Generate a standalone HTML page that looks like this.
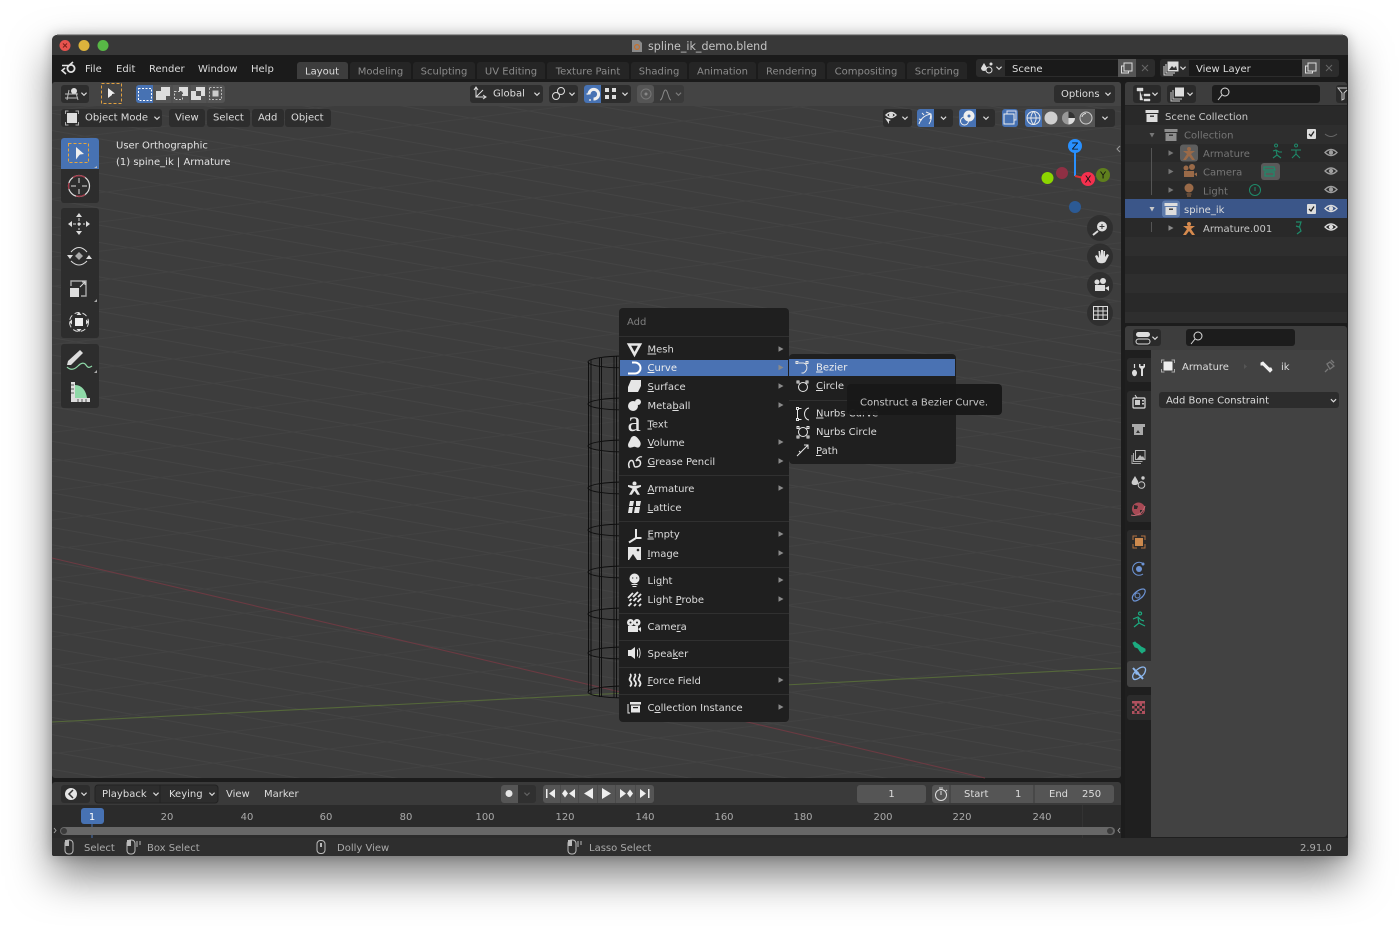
<!DOCTYPE html>
<html><head><meta charset="utf-8"><title>spline_ik_demo.blend</title>
<style>
html,body{margin:0;padding:0;background:#fff;width:1400px;height:926px;overflow:hidden}
#w{position:absolute;left:52px;top:35px;width:1296px;height:821px;border-radius:5px 5px 2px 2px;box-shadow:0 20px 42px rgba(0,0,0,.5),0 0 12px rgba(0,0,0,.22)}
svg{position:absolute;left:0;top:0}
text{font:10px "DejaVu Sans",sans-serif;fill:#c8c8c8}
.u{text-decoration:underline}
.d{fill:#767676}.g{fill:#8c8c8c}.l{fill:#e2e2e2}.m{fill:#aaa}.e{fill:#ddd}
.c{text-anchor:middle}
.i{fill:#e6e6e6}.s{fill:none;stroke:#e6e6e6;stroke-width:1.4}
</style></head><body>
<div id="w"></div>
<svg width="1400" height="926" viewBox="0 0 1400 926">
<defs>
<path id="chev" d="M-2.6-1.3L0 1.3L2.6-1.3" fill="none" stroke="#ddd" stroke-width="1.1"/>
<path id="arr" d="M-2.5-2.7L2.5 0L-2.5 2.7z" fill="#8a8a8a"/>
<g id="eye"><path d="M-6 0Q0-6 6 0Q0 6-6 0z" fill="none" stroke="#ddd" stroke-width="1.3"/><circle r="2.2" fill="#ddd"/></g>
<g id="box"><path d="M-6.5-6h13v3h-13z" fill="#ddd"/><path d="M-5.5-2h11v8h-11z" fill="#ddd"/><path d="M-2-.5h4v1.4h-4z" fill="#333"/></g>
<g id="arm"><circle cy="-5" r="2" /><path d="M-6-3L6-3L2 0L6 6L3 6L0 2L-3 6L-6 6L-2 0z"/></g>
<g id="mouse"><rect x="-4" y="-7" width="8" height="14" rx="3.4" fill="none" stroke="#bbb" stroke-width="1"/><path d="M-4-7h4v6h-4z" fill="#bbb"/></g>
<pattern id="g1" width="60" height="17" patternUnits="userSpaceOnUse" patternTransform="rotate(10)"><path d="M0 .5H60" stroke="#444" stroke-width="1"/></pattern>
<pattern id="g2" width="90" height="29" patternUnits="userSpaceOnUse" patternTransform="rotate(-7)"><path d="M0 .5H90" stroke="#424242" stroke-width="1"/></pattern>
</defs>

<!-- window -->
<path d="M52 40a5 5 0 0 1 5-5H1343a5 5 0 0 1 5 5V854a2 2 0 0 1-2 2H54a2 2 0 0 1-2-2z" fill="#1c1c1c"/>
<path d="M52 40a5 5 0 0 1 5-5H1343a5 5 0 0 1 5 5V55H52z" fill="#383838"/>
<path d="M57 35H1343" stroke="#5a5a5a"/>
<circle cx="65" cy="45.5" r="5.5" fill="#e8534e"/><path d="M63 43.5l4 4m0-4l-4 4" stroke="#7a1f1a" stroke-width="1"/>
<circle cx="84" cy="45.5" r="5.5" fill="#dcb33c"/><circle cx="103" cy="45.5" r="5.5" fill="#58b846"/>
<path d="M632 40h7l3 3v9h-10z" fill="#8a8a8a"/><circle cx="637" cy="47" r="2.4" fill="none" stroke="#c9702b" stroke-width="1.2"/>
<text x="648" y="50" style="font:11.1px 'DejaVu Sans',sans-serif;fill:#c4c4c4">spline_ik_demo.blend</text>

<!-- top bar -->
<rect x="52" y="55" width="1296" height="27" fill="#1b1b1b"/>
<g><circle cx="71" cy="68.5" r="3.6" fill="none" stroke="#e2e2e2" stroke-width="1.8"/><path d="M62 65.500h7l4-3.500M65 68l-3 2.500 4 3.500" fill="none" stroke="#e2e2e2" stroke-width="1.600"/></g>
<text class="e" x="85" y="72">File</text><text class="e" x="116" y="72">Edit</text><text class="e" x="149" y="72">Render</text><text class="e" x="198" y="72">Window</text><text class="e" x="251" y="72">Help</text>
<path d="M297 79V65a3 3 0 0 1 3-3h45a3 3 0 0 1 3 3v14z" fill="#3d3d3d"/>
<g fill="#252525">
<path d="M350 79V65a3 3 0 0 1 3-3h55a3 3 0 0 1 3 3v14z"/><path d="M413 79V65a3 3 0 0 1 3-3h56a3 3 0 0 1 3 3v14z"/><path d="M477 79V65a3 3 0 0 1 3-3h62a3 3 0 0 1 3 3v14z"/><path d="M547 79V65a3 3 0 0 1 3-3h76a3 3 0 0 1 3 3v14z"/><path d="M631 79V65a3 3 0 0 1 3-3h50a3 3 0 0 1 3 3v14z"/><path d="M689 79V65a3 3 0 0 1 3-3h61a3 3 0 0 1 3 3v14z"/><path d="M758 79V65a3 3 0 0 1 3-3h61a3 3 0 0 1 3 3v14z"/><path d="M827 79V65a3 3 0 0 1 3-3h72a3 3 0 0 1 3 3v14z"/><path d="M907 79V65a3 3 0 0 1 3-3h54a3 3 0 0 1 3 3v14z"/></g>
<g class="c"><text class="c e" x="322" y="74.5">Layout</text><text class="c g" x="380.5" y="74.5">Modeling</text><text class="c g" x="444" y="74.5">Sculpting</text><text class="c g" x="511" y="74.5">UV Editing</text><text class="c g" x="588" y="74.5">Texture Paint</text><text class="c g" x="659" y="74.5">Shading</text><text class="c g" x="722.5" y="74.5">Animation</text><text class="c g" x="791.5" y="74.5">Rendering</text><text class="c g" x="866" y="74.5">Compositing</text><text class="c g" x="937" y="74.5">Scripting</text></g>
<!-- scene -->
<rect x="976" y="59" width="179" height="18" rx="3" fill="#2c2c2c"/><rect x="1005" y="60" width="113" height="16" fill="#1a1a1a"/><rect x="1118" y="59" width="18" height="18" fill="#555"/>
<path d="M984 63l3 5a3 3 0 1 1-6 0z" fill="#ddd"/><circle cx="989" cy="70" r="3" fill="none" stroke="#ddd"/><circle cx="991" cy="64" r="1.5" fill="#ddd"/><use href="#chev" x="999" y="68"/>
<text class="e" x="1012" y="72">Scene</text>
<g fill="none" stroke="#ddd"><rect x="1124" y="63" width="8" height="8"/><path d="M1124 66h-2.5v7h7v-2"/></g><path d="M1142 65l6 6m0-6l-6 6" stroke="#666"/>
<rect x="1160" y="59" width="179" height="18" rx="3" fill="#2c2c2c"/><rect x="1189" y="60" width="113" height="16" fill="#1a1a1a"/><rect x="1302" y="59" width="18" height="18" fill="#555"/>
<g fill="none" stroke="#ddd"><rect x="1168" y="62" width="10" height="9" fill="#ddd"/><path d="M1166 64v9h9M1164 66v9h9"/></g><path d="M1169 70l3-4 2 2 2-2 1 4z" fill="#333"/><use href="#chev" x="1183" y="68"/>
<text class="e" x="1196" y="72">View Layer</text>
<g fill="none" stroke="#ddd"><rect x="1308" y="63" width="8" height="8"/><path d="M1308 66h-2.5v7h7v-2"/></g><path d="M1326 65l6 6m0-6l-6 6" stroke="#666"/>

<!-- viewport -->
<rect x="52" y="82" width="1069" height="696" rx="3" fill="#3d3d3d"/>
<rect x="52" y="106" width="1069" height="672" fill="url(#g1)"/><rect x="52" y="106" width="1069" height="672" fill="url(#g2)"/>
<path d="M52 85a3 3 0 0 1 3-3H1118a3 3 0 0 1 3 3v21H52z" fill="#444"/>
<path d="M52 558L985 778" stroke="#6b3a42" stroke-width="1.1"/><path d="M52 722L1121 668" stroke="#55683a" stroke-width="1.1"/>
<!-- cylinder -->
<g fill="none" stroke="#0d0d0d" stroke-width=".9">
<path d="M588.500 362V692M591 360V694M599.500 358V697M601.500 358V697M614 356V698M616.500 356V698"/>
<ellipse cx="625" cy="362" rx="37" ry="6"/><ellipse cx="625" cy="404" rx="37" ry="6"/><ellipse cx="625" cy="446" rx="37" ry="6"/><ellipse cx="625" cy="488" rx="37" ry="6"/><ellipse cx="625" cy="530" rx="37" ry="6"/><ellipse cx="625" cy="572" rx="37" ry="6"/><ellipse cx="625" cy="614" rx="37" ry="6"/><ellipse cx="625" cy="653" rx="37" ry="6"/><ellipse cx="625" cy="692" rx="37" ry="6"/>
</g>

<!-- tool settings -->
<rect x="61" y="85" width="28" height="18" rx="3" fill="#2d2d2d"/><circle cx="74" cy="91" r="3" fill="#ddd"/><path d="M65 94h13M65 98h13M69 90l-2 10M76 93l2 7" stroke="#bbb" fill="none"/><use href="#chev" x="84" y="94"/>
<rect x="101.500" y="83.500" width="20" height="20" fill="none" stroke="#e0a040" stroke-dasharray="3 2"/><path d="M108 88l7 5.500-3 .5v1l-4 3z" fill="#eee"/>
<rect x="136" y="85" width="89" height="18" rx="3" fill="#545454"/><path d="M139 85h14v18h-14a3 3 0 0 1-3-3v-12a3 3 0 0 1 3-3z" fill="#4772b3"/>
<rect x="138.500" y="88.500" width="13" height="12" fill="none" stroke="#fff" stroke-dasharray="2 1.500"/>
<path d="M156 91h5v-4h9v9h-4v4h-10z" fill="#ddd"/>
<rect x="174.500" y="91.500" width="8" height="8" fill="none" stroke="#ccc" stroke-dasharray="2 1.500"/><path d="M179 87h9v9h-5v-5h-4z" fill="#ddd"/>
<path d="M191 91h5v-4h9v9h-4v4h-10zM196 91v5h5v-5z" fill="#ddd" fill-rule="evenodd"/>
<rect x="209.500" y="87.500" width="12" height="12" fill="none" stroke="#bbb" stroke-dasharray="2 1.500"/><rect x="212.500" y="90.500" width="6" height="6" fill="#ccc"/>
<path d="M172 85v18M190 85v18M207 85v18" stroke="#4a4a4a"/>
<rect x="470" y="85" width="73" height="18" rx="3" fill="#2d2d2d"/><path d="M476 88v9h9M474 90l2-3 2 3M483 95l3 2-3 2M476 97l7-7" fill="none" stroke="#ddd"/><text class="e" x="493" y="96.500">Global</text><use href="#chev" x="537" y="94"/>
<rect x="549" y="85" width="29" height="18" rx="3" fill="#2d2d2d"/><circle cx="556" cy="96" r="3.500" fill="none" stroke="#ddd"/><circle cx="561" cy="91" r="3.500" fill="none" stroke="#ddd"/><use href="#chev" x="572" y="94"/>
<rect x="584" y="85" width="47" height="18" rx="3" fill="#2d2d2d"/><path d="M587 85h14v18h-14a3 3 0 0 1-3-3v-12a3 3 0 0 1 3-3z" fill="#4772b3"/>
<path d="M589 94.500a4.800 4.800 0 1 1 4.500 4.500" fill="none" stroke="#eee" stroke-width="3"/><path d="M586.500 94h1.500M589 100h2" stroke="#ddd" stroke-width="1.500"/>
<g fill="#ddd"><rect x="605" y="88" width="4" height="4"/><rect x="612" y="88" width="4" height="4"/><rect x="605" y="95" width="4" height="4"/><rect x="612" y="95" width="4" height="4"/></g><use href="#chev" x="625" y="94"/>
<rect x="637" y="85" width="47" height="18" rx="3" fill="#3a3a3a"/><rect x="637" y="85" width="17" height="18" rx="3" fill="#555"/><circle cx="646" cy="94" r="5" fill="none" stroke="#777"/><circle cx="646" cy="94" r="1.500" fill="#888"/><path d="M660 100c3 0 3-10 5.500-10s3 10 5.500 10" fill="none" stroke="#888"/><use href="#chev" x="678.500" y="94" opacity=".4"/>
<rect x="1054" y="85" width="61" height="18" rx="3" fill="#2d2d2d"/><text class="e" x="1061" y="97">Options</text><use href="#chev" x="1108" y="94"/>

<!-- header row -->
<rect x="61" y="109" width="101" height="18" rx="3" fill="#2d2d2d"/><rect x="67" y="113" width="10" height="10" fill="#ddd"/><path d="M65.500 114v-3h3M75.500 111h3v3M78.500 122v3h-3M68.500 125h-3v-3" fill="none" stroke="#aaa"/><text class="e" x="85" y="120.500">Object Mode</text><use href="#chev" x="157" y="118"/>
<rect x="169" y="109" width="36" height="18" rx="3" fill="#2d2d2d"/><rect x="207" y="109" width="43" height="18" rx="3" fill="#2d2d2d"/><rect x="252" y="109" width="32" height="18" rx="3" fill="#2d2d2d"/><rect x="285" y="109" width="46" height="18" rx="3" fill="#2d2d2d"/>
<text class="e" x="175" y="120.500">View</text><text class="e" x="213" y="120.500">Select</text><text class="e" x="258" y="120.500">Add</text><text class="e" x="291" y="120.500">Object</text>
<rect x="883" y="109" width="29" height="18" rx="3" fill="#2d2d2d"/><path d="M886 115q5-5 10 0q-5 5-10 0z" fill="none" stroke="#ddd" stroke-width="1.400"/><circle cx="891" cy="115" r="2" fill="#ddd"/><path d="M885 118l6 2-2 1v3z" fill="#ddd"/><use href="#chev" x="905" y="118"/>
<rect x="917" y="109" width="36" height="18" rx="3" fill="#2d2d2d"/><path d="M920 109h14v18h-14a3 3 0 0 1-3-3v-12a3 3 0 0 1 3-3z" fill="#4772b3"/><path d="M919 124c2-6 6-9 12-10M926 112l5 2-1 5M931 114c1 4 0 7-2 10M919 119l3 1M922 113l2 2" fill="none" stroke="#eee"/><use href="#chev" x="943.500" y="118"/>
<rect x="959" y="109" width="36" height="18" rx="3" fill="#2d2d2d"/><path d="M962 109h14v18h-14a3 3 0 0 1-3-3v-12a3 3 0 0 1 3-3z" fill="#4772b3"/><circle cx="969" cy="116" r="5.500" fill="#eee"/><circle cx="964.500" cy="121" r="4" fill="none" stroke="#eee"/><circle cx="969" cy="116" r="1.500" fill="#4772b3"/><use href="#chev" x="986" y="118"/>
<rect x="1002" y="109" width="16" height="18" rx="3" fill="#4772b3"/><rect x="1007" y="111" width="9" height="9" fill="none" stroke="#dde"/><rect x="1004" y="114" width="10" height="10" fill="#4772b3" stroke="#eee"/>
<rect x="1025" y="109" width="90" height="18" rx="3" fill="#2d2d2d"/><rect x="1042" y="109" width="35" height="18" fill="#555"/><rect x="1077" y="109" width="18" height="18" fill="#555"/><path d="M1028 109h14v18h-14a3 3 0 0 1-3-3v-12a3 3 0 0 1 3-3z" fill="#4772b3"/>
<circle cx="1033.500" cy="118" r="6.500" fill="none" stroke="#eee"/><path d="M1027 118h13M1033.500 111.500c-3.500 4-3.500 9 0 13M1033.500 111.500c3.500 4 3.500 9 0 13" fill="none" stroke="#eee" stroke-width=".9"/>
<circle cx="1051" cy="118" r="6.500" fill="#cfcfcf"/><circle cx="1068.500" cy="118" r="6.500" fill="#999"/><path d="M1068.500 118v-6.500a6.500 6.500 0 0 1 0 13z" fill="#333"/><path d="M1068.500 118h6.500a6.500 6.500 0 0 1-6.500 6.500z" fill="#ddd"/>
<circle cx="1086" cy="118" r="6" fill="#666" stroke="#ccc"/><path d="M1082 117a4 4 0 0 1 4-3.500" stroke="#ddd" fill="none"/><use href="#chev" x="1105" y="118"/>

<text class="l" x="116" y="148.500">User Orthographic</text><text class="l" x="116" y="165">(1) spine_ik | Armature</text>

<!-- toolbar -->
<rect x="61" y="138" width="38" height="65" rx="3" fill="#2d2d2d"/><path d="M64 138h32a3 3 0 0 1 3 3v28H61v-28a3 3 0 0 1 3-3z" fill="#4772b3"/>
<rect x="68.500" y="143.500" width="20" height="19" fill="none" stroke="#e6a63c" stroke-dasharray="3 2"/><path d="M76 147l8 7-4 .5-1 1-3 4z" fill="#eee"/><path d="M97 166v2h-3z" fill="#bbb"/>
<circle cx="79" cy="186" r="10.500" fill="none" stroke="#ddd" stroke-width="1.200"/><path d="M73 177.500a10.500 10.500 0 0 1 12 0M85 194.500a10.500 10.500 0 0 1-9 1.300M69 183a10.500 10.500 0 0 0 0 6" stroke="#a43848" fill="none" stroke-width="1.300"/><path d="M79 178v5M79 189v5M71 186h5M82 186h5" stroke="#ddd"/>
<rect x="61" y="208" width="38" height="130" rx="3" fill="#2d2d2d"/><rect x="61" y="344" width="38" height="64" rx="3" fill="#2d2d2d"/>
<path d="M79 213l3 4h-6zM79 235l3-4h-6zM68 224l4-3v6zM90 224l-4-3v6z" fill="#ddd"/><path d="M79 218v12M73 224h12" stroke="#ddd" stroke-dasharray="3 2"/><circle cx="79" cy="224" r="1.500" fill="#ddd"/>
<path d="M71 252Q79 243 87 252M71 261Q79 269 87 261" fill="none" stroke="#ddd"/><path d="M67 255h6l-3 4zM86 259h6l-3-4z" fill="#ddd"/><path d="M79 252l4 4-4 4-4-4z" fill="#aaa"/>
<rect x="70" y="288" width="9" height="9" fill="#ddd"/><path d="M71 286v-5h15v15h-5" fill="none" stroke="#aaa" stroke-width="1.400"/><path d="M80 287l5-5M82 282h3v3" stroke="#ddd" fill="none"/><path d="M97 299v3h-3z" fill="#aaa"/>
<circle cx="79" cy="322" r="9.500" fill="none" stroke="#ddd" stroke-dasharray="5 3"/><rect x="75" y="318" width="8" height="8" fill="#eee"/><path d="M79 312l-2.500 3h5zM79 332l-2.500-3h5zM69 322l3-2.500v5zM89 322l-3-2.500v5z" fill="#ddd"/>
<path d="M67 365l1-4 12-11 3 3-12 12z" fill="#ddd"/><path d="M67 367c4 4 8 2 11-1s6-4 8-1 3 3 6 1" stroke="#8fd9a8" fill="none" stroke-width="1.200"/><path d="M97 370v3h-3z" fill="#aaa"/>
<path d="M71 382h4v16h15v4H71z" fill="#ddd"/><path d="M75 385c7 0 11 6 12 13H75z" fill="#8fd9a8"/><path d="M71 385h3M71 389h3M71 393h3M78 402v-3M82 402v-3M86 402v-3" stroke="#555"/>

<!-- gizmo -->
<path d="M1075 146V176" stroke="#2890ff" stroke-width="2"/><path d="M1075 176l13 3" stroke="#d33" stroke-width="2"/>
<circle cx="1103" cy="175" r="7" fill="#5f7f1d"/><circle cx="1047.500" cy="178" r="6" fill="#8cd600"/><circle cx="1062" cy="173" r="6" fill="#8f3044"/><circle cx="1075" cy="207" r="6" fill="#2c5a94"/>
<circle cx="1075" cy="146" r="7" fill="#2890ff"/><circle cx="1088" cy="179" r="7" fill="#f5304e"/>
<text x="1075" y="149.500" class="c" style="fill:#111">Z</text><text x="1088" y="182.500" class="c" style="fill:#111">X</text><text x="1103" y="178.500" class="c" style="fill:#111">Y</text>
<path d="M1120 146l-3 3 3 3" stroke="#999" fill="none"/>
<g fill="#2d2d2d" opacity=".85"><circle cx="1100" cy="228" r="13"/><circle cx="1100" cy="256.500" r="13"/><circle cx="1100" cy="285" r="13"/><circle cx="1100" cy="313" r="13"/></g>
<circle cx="1102" cy="226.500" r="5" fill="#ddd"/><path d="M1098 231l-5 4" stroke="#ddd" stroke-width="2"/><path d="M1102 224v5M1099.500 226.500h5" stroke="#333"/>
<path d="M1095 256l2 5c1 3 8 3 9 0l3-6-2-1-2 3v-6h-1.500l-.5 5v-6h-2v6l-1-5h-1.500l.5 7-2-3z" fill="#ddd"/>
<circle cx="1097" cy="282" r="2.500" fill="#ddd"/><circle cx="1103" cy="281" r="3" fill="#ddd"/><rect x="1095" y="285" width="10" height="6" fill="#ddd"/><path d="M1105 288l4-2v5z" fill="#ddd"/>
<g stroke="#ddd" fill="none"><rect x="1093.500" y="306.500" width="14" height="13"/><path d="M1098 306.500v13M1103 306.500v13M1093.500 311h14M1093.500 315h14"/></g>

<!-- menu -->
<rect x="619" y="308" width="170" height="414" rx="4" fill="#1f1f1f"/>
<text x="627" y="325" style="fill:#7f7f7f">Add</text>
<g stroke="#303030"><path d="M619 336.500H789M619 475.500H789M619 521.500H789M619 567.500H789M619 613.500H789M619 640.500H789M619 667.500H789M619 694.500H789"/></g>
<rect x="620" y="360" width="168" height="16" fill="#4a72b3"/>
<g class="m"><text x="647.500" y="352.500" class="e"><tspan class="u">M</tspan>esh</text><text x="647.500" y="371" style="fill:#eee"><tspan class="u">C</tspan>urve</text><text x="647.500" y="390" class="e"><tspan class="u">S</tspan>urface</text><text x="647.500" y="409" class="e">Meta<tspan class="u">b</tspan>all</text><text x="647.500" y="427.500" class="e"><tspan class="u">T</tspan>ext</text><text x="647.500" y="446" class="e"><tspan class="u">V</tspan>olume</text><text x="647.500" y="465" class="e"><tspan class="u">G</tspan>rease Pencil</text>
<text x="647.500" y="492" class="e"><tspan class="u">A</tspan>rmature</text><text x="647.500" y="511" class="e"><tspan class="u">L</tspan>attice</text><text x="647.500" y="537.500" class="e"><tspan class="u">E</tspan>mpty</text><text x="647.500" y="557" class="e"><tspan class="u">I</tspan>mage</text><text x="647.500" y="584" class="e">Li<tspan class="u">g</tspan>ht</text><text x="647.500" y="603" class="e">Light <tspan class="u">P</tspan>robe</text><text x="647.500" y="630" class="e">Came<tspan class="u">r</tspan>a</text><text x="647.500" y="657" class="e">Spea<tspan class="u">k</tspan>er</text><text x="647.500" y="684" class="e"><tspan class="u">F</tspan>orce Field</text><text x="647.500" y="711" class="e">C<tspan class="u">o</tspan>llection Instance</text></g>
<use href="#arr" x="781" y="349"/><use href="#arr" x="781" y="367.500"/><use href="#arr" x="781" y="386"/><use href="#arr" x="781" y="405"/><use href="#arr" x="781" y="442"/><use href="#arr" x="781" y="461"/><use href="#arr" x="781" y="488"/><use href="#arr" x="781" y="534"/><use href="#arr" x="781" y="553"/><use href="#arr" x="781" y="580"/><use href="#arr" x="781" y="599"/><use href="#arr" x="781" y="680"/><use href="#arr" x="781" y="707"/>
<!-- menu icons -->
<path d="M629 344.500H640L634.500 354.500z" fill="none" stroke="#e6e6e6" stroke-width="2.600"/>
<path d="M632 362.500h3a5.500 5.500 0 0 1 0 11h-7" fill="none" stroke="#fff" stroke-width="2"/>
<path d="M631 380h10v6l-3 6h-10v-5z" class="i"/>
<circle cx="633" cy="406" r="5" class="i"/><circle cx="638" cy="402" r="3" class="i"/>
<text x="627.500" y="431" style="font:30px 'Liberation Serif',serif;fill:#e6e6e6">a</text>
<path d="M628.500 447c-1.500-3 1-5 2-8s4-4 6-2 5 5 4 8-3 3-5 2-5 2-7 0z" class="i"/>
<path d="M629.500 468c-2-4 0-8 2.500-7.500s1 6.500 3.500 6.500 5-1 5-4-3-4-4.500-2" fill="none" stroke="#e6e6e6" stroke-width="1.500"/><path d="M636 461c1-3 4-5 6-4" fill="none" stroke="#e6e6e6" stroke-width="1.300"/>
<circle cx="634.500" cy="483.500" r="2" class="i"/><path d="M628 485l6.500 1 6.500-1v1.800l-4.500 2 3.500 6h-2.800l-2.700-4-2.700 4h-2.800l3.500-6-4.500-2z" class="i"/>
<path d="M630 501h4l-1 5h-4zM636 501h5l-1 5h-4zM629 507h4l-1 6h-4zM635 507h5l-1 6h-5z" class="i"/>
<path d="M636 529v9l5.500 0M636 538l-7 4.500" fill="none" stroke="#e6e6e6" stroke-width="2"/>
<rect x="628" y="547" width="13" height="13" class="i"/><path d="M629 560l4-6 4 6z" fill="#222"/><circle cx="638" cy="550" r="1.300" fill="#222"/>
<circle cx="634.500" cy="578.500" r="5" class="i"/><path d="M631.500 584.500h6M632.500 586.500h4" stroke="#e6e6e6"/><path d="M632 578h1.300M636 578h1.300" stroke="#333"/>
<g stroke="#e6e6e6" stroke-width="1.900" fill="none"><path d="M628 598l5-5M629.500 601l2-2M633 597l5-5M628.500 606l3-3M633.500 601l3-3M638 597l3-3M634 606l2-2M637.500 602l3.500-3.500M639 606l2-2"/></g>
<circle cx="630.500" cy="622.500" r="3.500" class="i"/><circle cx="637" cy="622.500" r="3.500" class="i"/><rect x="628" y="626" width="10" height="6" class="i"/><path d="M638 629l3-2v5z" class="i"/><circle cx="630.500" cy="622.500" r="1" fill="#222"/><circle cx="637" cy="622.500" r="1" fill="#222"/>
<path d="M628 650h3l4-3v12l-4-3h-3z" class="i"/><path d="M637.500 649.500v7M639 648c1.500 3 1.500 7 0 10" fill="none" stroke="#e6e6e6"/>
<path d="M630 674c3 2-2 4.500 0 6.500s2 4 0 6M634.500 674c3 2-2 4.500 0 6.500s2 4 0 6M639 674c3 2-2 4.500 0 6.500s2 4 0 6" fill="none" stroke="#e6e6e6" stroke-width="1.800"/>
<path d="M630 702h11v2.500h-11zM631 705.500h9v7h-9z" class="i"/><path d="M633 707h5v1.200h-5z" fill="#222"/><path d="M628 704v9h2" fill="none" stroke="#e6e6e6"/>

<!-- submenu -->
<rect x="789" y="354" width="167" height="110" rx="4" fill="#1f1f1f"/>
<rect x="789" y="359" width="166" height="17" fill="#4a72b3"/>
<path d="M789 400.500H956" stroke="#303030"/>
<text x="816" y="370.500" style="fill:#eee"><tspan class="u">B</tspan>ezier</text><text class="e" x="816" y="389"><tspan class="u">C</tspan>ircle</text><text class="e" x="816" y="416.500"><tspan class="u">N</tspan>urbs Curve</text><text class="e" x="816" y="435">N<tspan class="u">u</tspan>rbs Circle</text><text class="e" x="816" y="454"><tspan class="u">P</tspan>ath</text>
<g fill="none" stroke="#e6e6e6"><path d="M799 363h4.500c4 1 5 7 0 10h-2"/><rect x="796" y="361.500" width="2" height="2"/><rect x="806" y="361.500" width="2" height="2"/><circle cx="803" cy="387" r="4.500"/><rect x="797" y="381" width="2" height="2"/><rect x="806" y="381" width="2" height="2"/>
<path d="M797.500 410v8M798.500 408.500h3M798.500 419.500h3M809 408c-6 1-6 11 0 12"/><rect x="796.500" y="407.500" width="2" height="2"/><rect x="796.500" y="418.500" width="2" height="2"/>
<circle cx="803" cy="432" r="4.500"/><rect x="797" y="426.500" width="2" height="2"/><rect x="807" y="426.500" width="2" height="2"/><rect x="797" y="436" width="2" height="2"/><rect x="807" y="436" width="2" height="2"/>
<path d="M797 456l11-11M804 445h4v4M799 451l2 2"/></g>
<rect x="847" y="384" width="155" height="31" rx="4" fill="#181818" fill-opacity=".96"/>
<text x="860" y="405.500" style="fill:#c8c8c8">Construct a Bezier Curve.</text>

<!-- timeline -->
<path d="M52 785a3 3 0 0 1 3-3H1118a3 3 0 0 1 3 3v22H52z" fill="#3a3a3a"/>
<rect x="52" y="805" width="1069" height="33" fill="#2b2b2b"/>
<rect x="61" y="785" width="29" height="18" rx="3" fill="#2d2d2d"/><circle cx="71" cy="794" r="6" fill="#e6e6e6"/><path d="M73 790l-4 4 4 4" stroke="#333" fill="none" stroke-width="1.500"/><use href="#chev" x="84" y="794"/>
<rect x="95" y="785" width="123" height="18" rx="3" fill="#2d2d2d" stroke="#222"/><path d="M160 785v18" stroke="#222"/>
<text class="e" x="102" y="797">Playback</text><use href="#chev" x="156" y="794"/><text class="e" x="169" y="797">Keying</text><use href="#chev" x="212" y="794"/><text class="e" x="226" y="797">View</text><text class="e" x="264" y="797">Marker</text>
<rect x="501" y="785" width="35" height="18" rx="3" fill="#303030"/><path d="M504 785h14v18h-14a3 3 0 0 1-3-3v-12a3 3 0 0 1 3-3z" fill="#555"/><circle cx="509" cy="793.500" r="3.500" fill="#e6e6e6"/><use href="#chev" x="527" y="794" opacity=".3"/>
<rect x="543" y="785" width="111" height="18" rx="3" fill="#555"/>
<path d="M560.500 785v18M578.500 785v18M597.500 785v18M615.500 785v18M635.500 785v18" stroke="#4a4a4a"/>
<path d="M546 789h1.500v9H546zM555 789v9l-6-4.500zM562 793.500l3-4 3 4-3 4zM569 793.500l6-4.500v9zM593 788v11l-9-5.500zM602 788v11l9-5.500zM620 789l6 4.500-6 4.500zM627 793.500l3-4 3 4-3 4zM640 789l6 4.500-6 4.500zM648 789h1.500v9H648z" fill="#eee"/>
<rect x="857" y="785" width="69" height="18" rx="3" fill="#555"/><text class="c e" x="891.500" y="797">1</text>
<rect x="932" y="785" width="182" height="18" rx="3" fill="#555"/><path d="M950 785v18M1034 785v18" stroke="#3a3a3a"/>
<circle cx="941" cy="795" r="5.500" fill="none" stroke="#ddd"/><path d="M941 795v-4M939 788h4M946 790l1 1" stroke="#ddd"/>
<text class="e" x="964" y="797">Start</text><text class="e" x="1015" y="797">1</text><text class="e" x="1049" y="797">End</text><text class="e" x="1082" y="797">250</text>
<path d="M1082.500 805V838" stroke="#333"/>
<rect x="81" y="808" width="23" height="16" rx="3" fill="#4772b3"/><text class="c" x="92" y="820" style="fill:#fff">1</text><path d="M92 824V838" stroke="#4772b3"/>
<g class="g"><text class="c m" x="167" y="820">20</text><text class="c m" x="247" y="820">40</text><text class="c m" x="326" y="820">60</text><text class="c m" x="406" y="820">80</text><text class="c m" x="485" y="820">100</text><text class="c m" x="565" y="820">120</text><text class="c m" x="645" y="820">140</text><text class="c m" x="724" y="820">160</text><text class="c m" x="803" y="820">180</text><text class="c m" x="883" y="820">200</text><text class="c m" x="962" y="820">220</text><text class="c m" x="1042" y="820">240</text></g>
<rect x="60" y="827" width="1055" height="8" rx="4" fill="#676767"/><circle cx="64" cy="831" r="3" fill="#3a3a3a"/><circle cx="1110" cy="831" r="3" fill="#3a3a3a"/>
<path d="M54 828l2 2.500-2 2.500M1120 828l-2 2.500 2 2.500" stroke="#999" fill="none"/>

<!-- status -->
<path d="M52 838H1348V854a2 2 0 0 1-2 2H54a2 2 0 0 1-2-2z" fill="#2e2e2e"/>
<use href="#mouse" x="69" y="847"/><text class="m" x="84" y="851">Select</text>
<use href="#mouse" x="131" y="847"/><path d="M137 841v6M140 841v4" stroke="#bbb"/><text class="m" x="147" y="851">Box Select</text>
<rect x="317" y="840.500" width="8" height="13" rx="3.400" fill="none" stroke="#bbb"/><rect x="320" y="843" width="2" height="4" fill="#bbb"/><text class="m" x="337" y="851">Dolly View</text>
<use href="#mouse" x="572" y="847"/><path d="M578 841v6M581 841v4" stroke="#bbb"/><text class="m" x="589" y="851">Lasso Select</text>
<text class="m" x="1300" y="851">2.91.0</text>

<!-- outliner -->
<path d="M1125 85a3 3 0 0 1 3-3H1344a3 3 0 0 1 3 3V323H1125z" fill="#292929"/>
<path d="M1125 85a3 3 0 0 1 3-3H1344a3 3 0 0 1 3 3V105H1125z" fill="#3d3d3d"/>
<g fill="#2e2e2e"><rect x="1125" y="125" width="222" height="19"/><rect x="1125" y="162" width="222" height="19"/><rect x="1125" y="237" width="222" height="19"/><rect x="1125" y="274" width="222" height="19"/><rect x="1125" y="312" width="222" height="11"/></g>
<rect x="1125" y="199" width="222" height="19" fill="#3b5689"/>
<rect x="1133" y="85" width="28" height="18" rx="3" fill="#2a2a2a"/><path d="M1137 88h6v3h-6zM1140 91v9h3M1140 95h3M1144 94h6v2h-6zM1144 99h6v2h-6z" fill="#ddd" stroke="#ddd" stroke-width=".4"/><use href="#chev" x="1155" y="94"/>
<rect x="1167" y="85" width="29" height="18" rx="3" fill="#2a2a2a"/><rect x="1175" y="87.500" width="9" height="9" fill="#ddd"/><path d="M1173 90v9h9M1171 92v9h9" fill="none" stroke="#ccc"/><use href="#chev" x="1190" y="94"/>
<rect x="1212" y="85" width="108" height="18" rx="3" fill="#1c1c1c"/><circle cx="1225" cy="92" r="4" fill="none" stroke="#ddd"/><path d="M1222 95l-4 5" stroke="#ddd"/>
<path d="M1347 85h-8a3 3 0 0 0-3 3v12a3 3 0 0 0 3 3h8z" fill="#2a2a2a"/><path d="M1347 88h-9l4 5v7l2-1v-6l3-3" fill="none" stroke="#ccc"/>
<rect x="1125" y="105" width="222" height="1" fill="#242424"/>
<use href="#box" x="1152" y="116"/><text x="1165" y="120">Scene Collection</text>
<g opacity=".55"><use href="#box" x="1171" y="135"/></g><text class="d" x="1184" y="138.500">Collection</text>
<path d="M1149.500 133h5l-2.500 4.500z" fill="#777"/><path d="M1149.500 207h5l-2.500 4.500z" fill="#c8c8c8"/>
<rect x="1307" y="129" width="9" height="10" rx="1" fill="#ddd"/><path d="M1309 134l2 2 3-4.500" stroke="#222" fill="none" stroke-width="1.300"/><path d="M1325 134q6 5 12 0" stroke="#666" fill="none"/>
<path d="M1151.500 148V195M1151.500 222V232" stroke="#555"/>
<use href="#arr" x="1171" y="153" opacity=".8"/><use href="#arr" x="1171" y="171.500" opacity=".8"/><use href="#arr" x="1171" y="190" opacity=".8"/><use href="#arr" x="1171" y="228"/>
<rect x="1180" y="144.500" width="18" height="17" rx="3" fill="#5e5e5e"/><use href="#arm" x="1189" y="154" fill="#9a6a48"/>
<text class="d" x="1203" y="157">Armature</text>
<path d="M1276 147a1.500 1.500 0 1 1 .1 0M1273 151l3-1 3 2 3 0M1276 150l1 5-4 3M1277 155l4 3" fill="none" stroke="#1e8a6a" stroke-width="1.100"/><path d="M1296 147a1.500 1.500 0 1 1 .1 0M1291 150h10M1296 150v4l-4 4M1296 154l4 4" fill="none" stroke="#1e8a6a" stroke-width="1.100"/>
<circle cx="1186" cy="168" r="2.500" fill="#9a6a48"/><circle cx="1192" cy="167" r="3" fill="#9a6a48"/><rect x="1184" y="171" width="10" height="6" fill="#9a6a48"/><path d="M1194 174l3-1.500v4z" fill="#9a6a48"/>
<text class="d" x="1203" y="175.500">Camera</text>
<rect x="1261" y="163" width="19" height="17" rx="3" fill="#5a5a5a"/><path d="M1264 167h10l1 3h-11zM1265 172h9v4h-9z" fill="none" stroke="#1e8a6a" stroke-width="1.300"/>
<circle cx="1189" cy="188" r="4.500" fill="#9a6a48"/><path d="M1186.500 194h5M1187 196h4" stroke="#9a6a48"/>
<text class="d" x="1203" y="194.500">Light</text>
<circle cx="1255" cy="190" r="5.500" fill="none" stroke="#1e8a6a"/><path d="M1255 187v4" stroke="#1e8a6a"/>
<use href="#eye" x="1331" y="152.500" opacity=".65"/><use href="#eye" x="1331" y="171" opacity=".65"/><use href="#eye" x="1331" y="189.500" opacity=".65"/>
<rect x="1162" y="200.500" width="18" height="17" rx="3" fill="#5e7bab"/><use href="#box" x="1171" y="209"/>
<text x="1184" y="213" style="fill:#ddd">spine_ik</text><rect x="1307" y="204" width="9" height="10" rx="1" fill="#ddd"/><path d="M1309 209l2 2 3-4.500" stroke="#222" fill="none" stroke-width="1.300"/><use href="#eye" x="1331" y="208.500"/>
<use href="#arm" x="1189" y="229" fill="#d68a4e"/><text x="1203" y="232">Armature.001</text>
<path d="M1296 222h5l-1.500 5 1.500 4-4 3M1299 227l-3-1" fill="none" stroke="#1e8a6a" stroke-width="1.200"/><use href="#eye" x="1331" y="227"/>

<!-- properties -->
<path d="M1125 329a3 3 0 0 1 3-3H1344a3 3 0 0 1 3 3V838H1125z" fill="#1f1f1f"/>
<path d="M1125 329a3 3 0 0 1 3-3H1344a3 3 0 0 1 3 3V350H1125z" fill="#3d3d3d"/>
<path d="M1151 350H1347V834a3 3 0 0 1-3 3H1151z" fill="#424242"/>
<rect x="1133" y="329" width="28" height="17" rx="3" fill="#2a2a2a"/><rect x="1136" y="332" width="14" height="5" rx="2.500" fill="#ddd"/><rect x="1136" y="339" width="14" height="5" rx="2.500" fill="none" stroke="#ddd"/><use href="#chev" x="1155" y="338"/>
<rect x="1186" y="329" width="109" height="17" rx="3" fill="#1c1c1c"/><circle cx="1198" cy="336" r="4" fill="none" stroke="#ddd"/><path d="M1195 339l-4 5" stroke="#ddd"/>
<!-- tabs -->
<g fill="#2b2b2b"><path d="M1130 358h21v24h-21a3 3 0 0 1-3-3v-18a3 3 0 0 1 3-3z"/><path d="M1130 391h21v131h-21a3 3 0 0 1-3-3V394a3 3 0 0 1 3-3z"/><path d="M1130 530h21v157h-21a3 3 0 0 1-3-3V533a3 3 0 0 1 3-3z"/><path d="M1130 695h21v25h-21a3 3 0 0 1-3-3v-19a3 3 0 0 1 3-3z"/></g>
<path d="M1130 661h21v26h-21a3 3 0 0 1-3-3v-20a3 3 0 0 1 3-3z" fill="#424242"/>
<path d="M1134.500 364v4" stroke="#ddd" stroke-width="1.200"/><ellipse cx="1134.500" cy="373" rx="2.500" ry="3.200" fill="#ddd"/><path d="M1139 364v3l2 2v7h2v-7l2-2v-3l-1.500 0v2h-3v-2z" fill="#ddd"/>
<rect x="1133" y="398" width="12" height="10" rx="1" fill="none" stroke="#ddd" stroke-width="1.200"/><path d="M1135 395l2 3" stroke="#ddd"/><path d="M1135 400h5v5h-5zM1142 400h2v1.500h-2zM1142 403h2v1.500h-2z" fill="#ccc"/>
<path d="M1132 424h13v3h-2v8h-9v-8h-2z" fill="#aaa"/><path d="M1136 433l2-3 2 3z" fill="#333"/>
<rect x="1135.500" y="450.500" width="9.500" height="9" fill="#2b2b2b" stroke="#bbb"/><path d="M1137 459l3-4 2 2 1-1 1.500 3z" fill="#bbb"/><path d="M1133.500 453v8.500h9M1132 455v8.500h9" fill="none" stroke="#aaa"/>
<path d="M1135 476l3 5c1 3-1 4-2.500 4h-1.500c-2 0-3-2-2-4z" fill="#ccc"/><circle cx="1143" cy="478" r="1.700" fill="#ccc"/><circle cx="1141.500" cy="485" r="3.300" fill="#333" stroke="#ccc"/>
<circle cx="1138.500" cy="509" r="6.500" fill="#a84a55"/><path d="M1134 505l4 1-1 3-3 0zM1140 510l4 0-2 4-2-1z" fill="#2b2b2b"/><path d="M1131 515c6 2 12-2 14-9" fill="none" stroke="#c26a74"/>
<rect x="1135" y="538" width="8" height="8" fill="#cc8a4e"/><path d="M1133 540v-4h4M1141 536h4v4M1145 544v4h-4M1137 548h-4v-4" fill="none" stroke="#b07040"/>
<circle cx="1139" cy="569" r="3" fill="#6c93d4"/><path d="M1143 574a6.500 6.500 0 1 1-1-11" fill="none" stroke="#6c93d4"/><circle cx="1143" cy="564" r="1.500" fill="#6c93d4"/>
<path d="M1133 600c-3-5 6-11 10-11s2 6-2 9-7 4-8 2z" fill="none" stroke="#6c93d4" stroke-width="1.200"/><circle cx="1137.500" cy="595.500" r="2.500" fill="none" stroke="#6c93d4"/>
<path d="M1140 615a1.500 1.500 0 1 1 .1 0M1133 619l5-2 3 3 3 1M1138 618l1 5-5 4M1139 623l6 3" fill="none" stroke="#1cab80" stroke-width="1.200"/>
<path d="M1133 643l2-1 1 1 3 2 2 2 2 1 2 1 0 2-2 1-1 1-2-2-2-3-3-1-1-2z" fill="#1cab80" stroke="#1cab80"/>
<path d="M1133 678c-2-4 6-11 10-11s3 6-1 9-8 5-9 2z" fill="none" stroke="#8eb9f0" stroke-width="1.300"/><path d="M1133 668l10 11" stroke="#8eb9f0" stroke-width="2"/><circle cx="1137" cy="673" r="1.800" fill="#8eb9f0"/>
<rect x="1132" y="701" width="13" height="13" fill="#b0505e"/><path d="M1132 703.500h2.500v2.500h-2.500zM1137 703.500h2.500v2.500h-2.500zM1142 703.500h2.500v2.500h-2.500zM1134.500 706h2.500v2.500h-2.500zM1139.500 706h2.500v2.500h-2.500zM1132 708.500h2.500v2.500h-2.500zM1137 708.500h2.500v2.500h-2.500zM1142 708.500h2.500v2.500h-2.500zM1134.500 711h2.500v2.500h-2.500zM1139.500 711h2.500v2.500h-2.500z" fill="#2b2b2b"/>
<!-- breadcrumb -->
<rect x="1163.500" y="361.500" width="9" height="9" fill="#eee"/><path d="M1161.500 363v-3h3M1171.500 360h3v3M1174.500 369v3h-3M1164.500 372h-3v-3" fill="none" stroke="#aaa"/>
<text x="1182" y="370" class="e">Armature</text><path d="M1244 364l3 2.500-3 2.500z" fill="#555"/>
<path d="M1261 363l2-1 1 1 5 5 2 0 1 2-1 1-1 1-2-2-5-5-2 0z" fill="#eee" stroke="#eee"/><text x="1281" y="370" class="e">ik</text>
<path d="M1325 372l3-3M1327 364l3 5 4-3-4-4zM1331 360l3 3" fill="none" stroke="#777" stroke-width="1.300"/>
<rect x="1159" y="392" width="180" height="16" rx="3" fill="#2c2c2c"/><text x="1166" y="403.500" class="e">Add Bone Constraint</text><use href="#chev" x="1333.500" y="400.500"/>
</svg>
</body></html>
